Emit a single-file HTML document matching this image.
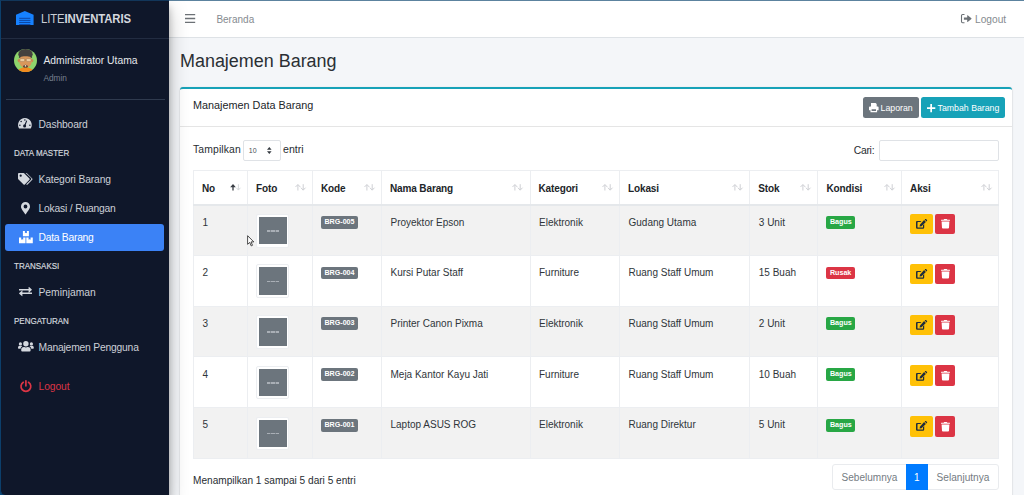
<!DOCTYPE html>
<html lang="id">
<head>
<meta charset="utf-8">
<title>Manajemen Barang</title>
<style>
*{box-sizing:border-box;margin:0;padding:0}
html,body{width:1024px;height:495px;overflow:hidden}
body{position:relative;background:#f4f6f9;font-family:"Liberation Sans",sans-serif;font-size:10px;color:#282d32;line-height:1}
.abs{position:absolute;white-space:nowrap}
svg{display:block;overflow:visible}
/* sidebar */
#sb{position:absolute;left:0;top:0;width:169px;height:495px;background:#0f172a;border-left:1px solid #0c3f6b;border-top:1px solid #12365a;border-bottom-left-radius:5px;box-shadow:0 9px 19px rgba(0,0,0,.25),0 7px 7px rgba(0,0,0,.22);z-index:5}
#sb .t{position:absolute;white-space:nowrap;color:#ccd0d7;font-size:10.3px;left:37.5px}
#sb .h{position:absolute;white-space:nowrap;color:#d3d7de;font-size:8.9px;left:13px;transform-origin:0 50%;transform:scaleX(.9);-webkit-text-stroke:.2px #d3d7de}
#sb svg{position:absolute}
/* navbar */
#nb{position:absolute;left:169px;top:0;width:855px;height:38px;background:#fff;border-top:1px solid #5c839f;border-bottom:1px solid #dee2e6}
#nb svg{position:absolute}
/* card */
#card{position:absolute;left:180px;top:87px;width:831.600px;height:420px;background:#fff;border-top:2px solid #17a2b8;border-radius:3px 3px 0 0;box-shadow:0 0 1px rgba(0,0,0,.125),0 1px 2px rgba(0,0,0,.2)}
#chd{position:absolute;left:0;top:0;width:100%;height:37.7px;border-bottom:1px solid rgba(0,0,0,.1)}
.btn{position:absolute;height:21px;border-radius:2.5px;color:#fff;font-size:8.75px}
.btn svg{position:absolute}
/* table */
#tb{position:absolute;left:193px;top:170px;width:806px;border-collapse:collapse;table-layout:fixed;font-size:10px}
#tb th,#tb td{border:1px solid #eceef1;vertical-align:top;text-align:left;overflow:hidden;white-space:nowrap}
#tb th{height:34px;padding:12.600px 0 0 8px;font-weight:bold;font-size:10px;letter-spacing:-.13px;border-bottom:2px solid #e5e8eb;position:relative;color:#212529}
#tb td{height:50.800px;padding:12.300px 0 0 8.500px;color:#2f353a}
#tb tr.o td{background:#f2f2f2}
.srt{position:absolute;right:6.200px;top:13.100px;width:11px;height:6.600px}
.th{display:block;width:33px;height:33.600px;border:1px solid #eceef1;border-radius:2px;background:#fff;padding:2px 0 0 1.600px;margin-top:-3.900px;margin-left:-.2px}
.th i{display:block;width:27.900px;height:27.500px;background:#6c757d;position:relative}
.th i:after{content:"";position:absolute;left:8.300px;top:13.300px;width:11.300px;height:1.500px;background:repeating-linear-gradient(90deg,#a9afb6 0 3.500px,#858c93 3.500px 4.500px)}
.bd{display:inline-block;font-weight:bold;font-size:7.15px;line-height:7.15px;color:#fff;border-radius:2px;padding:3px 3.600px 2.600px;position:relative;top:-1.600px;left:-.7px}
.bk{background:#6c757d}.bg{background:#28a745}.br{background:#dc3545}
.ab{display:inline-block;height:20.600px;border-radius:2px;vertical-align:top;margin-top:-4.300px;position:relative;left:-.75px}
.ab svg{position:absolute}
</style>
</head>
<body>

<!-- SIDEBAR -->
<div class="abs" style="left:0;top:0;width:10px;height:495px;background:linear-gradient(180deg,#0c3f6b 0,#0c3f6b 470px,#0d5d9c 495px);z-index:4"></div>
<div id="sb">
  <div class="abs" style="left:0;top:36.5px;width:168px;height:1px;background:#222c41"></div>
  <!-- warehouse -->
  <svg style="left:15px;top:10px" width="17.6" height="14" viewBox="0 0 17.6 14"><path d="M8.8 0 17.6 3.7V14H0V3.7z" fill="#1681ff"/><path d="M3.2 7.3h11.2M3.2 9.4h11.2M3.2 11.5h11.2M3.2 13.6h11.2" stroke="#0b3f9a" stroke-width=".9"/></svg>
  <div class="abs" style="left:40.200px;top:12.200px;font-size:12px;color:#d5d8de;letter-spacing:-.15px;transform-origin:0 50%;transform:scaleX(.945)"><span style="color:#c9cdd4">LITE</span><b>INVENTARIS</b></div>
  <!-- avatar -->
  <svg style="left:12.8px;top:48.2px;border-radius:50%;overflow:hidden" width="23" height="23" viewBox="0 0 23 23"><g><rect width="23" height="23" fill="#8ed56c"/><ellipse cx="11.5" cy="5.2" rx="7.2" ry="5.6" fill="#45423f"/><ellipse cx="4.900" cy="11.600" rx="1.200" ry="1.600" fill="#c98a50"/><ellipse cx="18.100" cy="11.600" rx="1.200" ry="1.600" fill="#c98a50"/><ellipse cx="11.5" cy="12" rx="6.300" ry="7" fill="#d9975b"/><path d="M4.800 9.200Q5.200 3.600 11.500 3.800Q17.800 3.600 18.200 9.200Q15.500 6.600 11.500 7.300Q7.500 6.600 4.800 9.200z" fill="#45423f"/><rect x="6" y="9.700" width="4.700" height="2.700" rx=".9" fill="#f3d2a4" stroke="#8a6a4a" stroke-width=".4"/><rect x="12.300" y="9.700" width="4.700" height="2.700" rx=".9" fill="#f3d2a4" stroke="#8a6a4a" stroke-width=".4"/><path d="M10.700 11h1.600" stroke="#8a6a4a" stroke-width=".4"/><ellipse cx="11.5" cy="17.600" rx="2.300" ry="1.900" fill="#4a3a30"/><ellipse cx="11.5" cy="16.900" rx=".9" ry=".8" fill="#f0e0d0"/><ellipse cx="11.5" cy="23.400" rx="8.600" ry="4.800" fill="#f18b1f"/></g></svg>
  <div class="abs" style="left:42.4px;top:54.5px;font-size:10.34px;color:#e4e7eb">Administrator Utama</div>
  <div class="abs" style="left:42.4px;top:72.5px;font-size:8.3px;color:#77808f">Admin</div>
  <div class="abs" style="left:5px;top:98.200px;width:159px;height:1px;background:#2f3a4e"></div>

  <!-- tachometer -->
  <svg style="left:17.300px;top:116.900px" width="13.8" height="10.6" viewBox="0 0 13.8 10.6"><path d="M6.9 0A6.9 6.9 0 0 0 .95 10.35.5.5 0 0 0 1.4 10.6H12.4a.5.5 0 0 0 .45-.25A6.9 6.9 0 0 0 6.9 0z" fill="#d4d8de"/><g fill="#0f172a"><circle cx="6.9" cy="1.9" r=".75"/><circle cx="3.1" cy="3.6" r=".75"/><circle cx="1.9" cy="7.2" r=".75"/><circle cx="11.9" cy="7.2" r=".75"/><circle cx="6.6" cy="8" r="1.5"/><path d="M6.2 7.2 8.3 2.4 9.2 2.8 7.4 7.8z"/></g></svg>
  <div class="t" style="top:119.2px;letter-spacing:-0.13px">Dashboard</div>
  <div class="h" style="top:148.4px">DATA MASTER</div>
  <!-- tags -->
  <svg style="left:16.8px;top:172.2px" width="15" height="11.8" viewBox="0 0 15 11.8"><path d="M0 .9V5.5a.9.9 0 0 0 .26.63l5.3 5.3a.9.9 0 0 0 1.27 0l4.6-4.6a.9.9 0 0 0 0-1.27L6.13.26A.9.9 0 0 0 5.5 0H.9A.9.9 0 0 0 0 .9zM2.7 1.6a1.1 1.1 0 1 1 0 2.2 1.1 1.1 0 0 1 0-2.2z" fill="#d4d8de" fill-rule="evenodd"/><path d="M7.6 0H8.3a.9.9 0 0 1 .63.26l5.3 5.3a.9.9 0 0 1 0 1.27l-4.6 4.6a.9.9 0 0 1-1.27 0l-.1-.1 4.7-4.7a1.2 1.2 0 0 0 0-1.7z" fill="#d4d8de"/></svg>
  <div class="t" style="top:174.2px;letter-spacing:-0.14px">Kategori Barang</div>
  <!-- map marker -->
  <svg style="left:19.8px;top:200.7px" width="9" height="12.4" viewBox="0 0 9 12.4"><path d="M4.5 0A4.5 4.5 0 0 0 0 4.5C0 6.4.65 6.9 4.04 12.1a.55.55 0 0 0 .92 0C8.35 6.9 9 6.4 9 4.5A4.5 4.5 0 0 0 4.5 0zm0 6.4a1.9 1.9 0 1 1 0-3.8 1.9 1.9 0 0 1 0 3.8z" fill="#d4d8de" fill-rule="evenodd"/></svg>
  <div class="t" style="top:203.2px;letter-spacing:-0.19px">Lokasi / Ruangan</div>
  <div class="abs" style="left:4px;top:223px;width:159.3px;height:27px;background:#3b82f6;border-radius:3px"></div>
  <!-- boxes -->
  <svg style="left:17.6px;top:229.6px" width="13.8" height="12.2" viewBox="0 0 13.8 12.2"><path d="M3.9 0h2V2.2l1-.5 1 .5V0h2V5.3h-6zM0 6.6h2.2V8.8l1-.5 1 .5V6.6h2.3v5.6H0zM7.3 6.6h2.3V8.8l1-.5 1 .5V6.6h2.2v5.6H7.3z" fill="#fff"/></svg>
  <div class="t" style="top:232.2px;color:#fff;letter-spacing:-0.25px">Data Barang</div>
  <div class="h" style="top:261.4px">TRANSAKSI</div>
  <!-- exchange -->
  <svg style="left:17.8px;top:285.8px" width="13" height="9.2" viewBox="0 0 13 9.2"><path d="M0 2.1h9.6V.3c0-.3.3-.4.5-.2l2.7 2.4c.2.2.2.4 0 .6L10.100 5.500c-.2.200-.5.100-.5-.200V3.600H0zM13 7.100H3.400v1.800c0 .300-.3.400-.5.200L.2 6.700c-.2-.2-.2-.4 0-.6L2.900 3.700c.2-.2.500-.1.500.2V5.600H13z" fill="#d4d8de"/></svg>
  <div class="t" style="top:287.2px">Peminjaman</div>
  <div class="h" style="top:315.6px">PENGATURAN</div>
  <!-- users -->
  <svg style="left:16.6px;top:339.9px" width="15.8" height="10.6" viewBox="0 0 15.8 10.6"><g fill="#d4d8de"><circle cx="2.4" cy="2.9" r="1.6"/><circle cx="13.4" cy="2.9" r="1.6"/><circle cx="7.9" cy="2.8" r="2.7"/><path d="M0 7.100V6.400A1.600 1.600 0 0 1 1.600 4.800h1.600c.4 0 .8.200 1.100.5A3.600 3.600 0 0 0 2.500 7.800H.7A.7.700 0 0 1 0 7.100zM15.800 7.100V6.400a1.600 1.600 0 0 0-1.600-1.600h-1.600c-.4 0-.8.200-1.100.5a3.600 3.600 0 0 1 1.800 2.500h1.800a.7.700 0 0 0 .7-.7zM9.800 6.100h-.2a3.900 3.900 0 0 1-3.400 0H6A2.800 2.800 0 0 0 3.200 8.900v.7a1 1 0 0 0 1 1h7.400a1 1 0 0 0 1-1v-.7A2.800 2.800 0 0 0 9.800 6.100z"/></g></svg>
  <div class="t" style="top:342.2px;letter-spacing:-0.19px">Manajemen Pengguna</div>
  <!-- power -->
  <svg style="left:18.9px;top:378.6px" width="11.8" height="11.8" viewBox="0 0 11.8 11.8"><path d="M3.300 2.300A4.900 4.900 0 1 0 8.500 2.300" fill="none" stroke="#dc3545" stroke-width="1.7" stroke-linecap="round"/><path d="M5.900.8V5.800" stroke="#dc3545" stroke-width="1.7" stroke-linecap="round"/></svg>
  <div class="t" style="top:381.2px;color:#dc3545;letter-spacing:-0.1px">Logout</div>
</div>

<!-- NAVBAR -->
<div id="nb">
  <svg style="left:15.600px;top:13.100px" width="10.2" height="9" viewBox="0 0 10.2 9"><path d="M0 .7h10.200M0 4.500h10.200M0 8.300h10.200" stroke="#6c7176" stroke-width="1.300"/></svg>
  <div class="abs" style="left:47.4px;top:13.8px;font-size:10px;color:#868b90">Beranda</div>
  <svg style="left:792.200px;top:12.800px" width="10.600" height="9.200" viewBox="0 0 10.600 9.200"><path d="M3.500.5H1.600A1.100 1.100 0 0 0 .5 1.600V7.600A1.100 1.100 0 0 0 1.600 8.700H3.500" fill="none" stroke="#6c7176" stroke-width="1.100"/><path d="M2.900 3.400H6.200V1.500c0-.3.300-.4.500-.2l3.700 3c.2.200.2.400 0 .6l-3.700 3c-.2.200-.5.100-.5-.2V5.800H2.900z" fill="#6c7176"/></svg>
  <div class="abs" style="left:806px;top:13.9px;font-size:10.2px;color:#868b90">Logout</div>
</div>

<!-- TITLE -->
<div class="abs" style="left:180px;top:52.900px;font-size:17.95px;color:#2a2f34">Manajemen Barang</div>

<!-- CARD -->
<div id="card">
  <div id="chd"></div>
  <div class="abs" style="left:13px;top:10.6px;font-size:10.83px;color:#212529">Manajemen Data Barang</div>
  <div class="btn" style="left:683px;top:8px;width:56.3px;background:#6c757d">
    <svg style="left:6px;top:5.800px" width="9.600" height="9.200" viewBox="0 0 9.600 9.200"><path d="M2 0H6.600L7.700 1.100V3.400H2zM.9 3.400H8.700a.9.900 0 0 1 .9.900V7.200H8.100V9.200H1.500V7.200H0V4.300a.9.900 0 0 1 .9-.9zM2.600 6.300V8.100H7V6.300z" fill="#fff" fill-rule="evenodd"/></svg>
    <span class="abs" style="left:17.6px;top:7.2px">Laporan</span></div>
  <div class="btn" style="left:741.4px;top:8px;width:83.600px;background:#17a2b8">
    <svg style="left:5.900px;top:6.700px" width="8.300" height="8.300" viewBox="0 0 8.300 8.300"><path d="M4.150 0V8.300M0 4.150H8.300" stroke="#fff" stroke-width="1.700"/></svg>
    <span class="abs" style="left:16.2px;top:7.2px">Tambah Barang</span></div>
</div>

<!-- LENGTH / SEARCH -->
<div class="abs" style="left:193px;top:145.3px;font-size:10.39px;letter-spacing:.13px">Tampilkan</div>
<div class="abs" style="left:243px;top:139.5px;width:38px;height:21.5px;border:1px solid #dfe2e6;border-radius:2px;background:#fff"><span class="abs" style="left:4.800px;top:6.800px;font-size:7px;color:#495057">10</span>
  <svg class="abs" style="left:23px;top:6.800px" width="4.600" height="7" viewBox="0 0 4.600 7"><path d="M0 2.800 2.300 0 4.600 2.800zM0 4.200 2.300 7 4.600 4.200z" fill="#343a40"/></svg></div>
<div class="abs" style="left:283px;top:144.400px;font-size:10.6px">entri</div>
<div class="abs" style="left:853.700px;top:145.600px;font-size:10.4px;letter-spacing:-.27px">Cari:</div>
<div class="abs" style="left:879px;top:139.5px;width:119.5px;height:21.5px;border:1px solid #dfe2e6;border-radius:2px;background:#fff"></div>

<!-- TABLE -->
<table id="tb">
<colgroup><col style="width:54px"><col style="width:65px"><col style="width:69px"><col style="width:148.5px"><col style="width:89.5px"><col style="width:130.3px"><col style="width:68.2px"><col style="width:83.6px"><col style="width:97px"></colgroup>
<tr><th>No<svg class="srt"><path d="M3 6.500V1.200" fill="none" stroke="#3a3f45" stroke-width="1.300"/><path d="M.2 3.200 3 .1 5.800 3.200z" fill="#3a3f45"/><path d="M8.400.2V5.800M6.400 3.800 8.400 6.100 10.400 3.800" fill="none" stroke="#cfd2d6" stroke-width=".85"/></svg></th><th>Foto<svg class="srt"><path d="M2.900 6.500V.9M.5 3 2.900.5 5.300 3" fill="none" stroke="#cbced2" stroke-width=".95"/><path d="M8.200.2V5.800M5.900 3.700 8.200 6.200 10.500 3.700" fill="none" stroke="#cbced2" stroke-width=".95"/></svg></th><th>Kode<svg class="srt"><path d="M2.900 6.500V.9M.5 3 2.900.5 5.300 3" fill="none" stroke="#cbced2" stroke-width=".95"/><path d="M8.200.2V5.800M5.900 3.700 8.200 6.200 10.500 3.700" fill="none" stroke="#cbced2" stroke-width=".95"/></svg></th><th>Nama Barang<svg class="srt"><path d="M2.900 6.500V.9M.5 3 2.900.5 5.300 3" fill="none" stroke="#cbced2" stroke-width=".95"/><path d="M8.200.2V5.800M5.900 3.700 8.200 6.200 10.500 3.700" fill="none" stroke="#cbced2" stroke-width=".95"/></svg></th><th>Kategori<svg class="srt"><path d="M2.900 6.500V.9M.5 3 2.900.5 5.300 3" fill="none" stroke="#cbced2" stroke-width=".95"/><path d="M8.200.2V5.800M5.900 3.700 8.200 6.200 10.500 3.700" fill="none" stroke="#cbced2" stroke-width=".95"/></svg></th><th>Lokasi<svg class="srt"><path d="M2.900 6.500V.9M.5 3 2.900.5 5.300 3" fill="none" stroke="#cbced2" stroke-width=".95"/><path d="M8.200.2V5.800M5.900 3.700 8.200 6.200 10.500 3.700" fill="none" stroke="#cbced2" stroke-width=".95"/></svg></th><th>Stok<svg class="srt"><path d="M2.900 6.500V.9M.5 3 2.900.5 5.300 3" fill="none" stroke="#cbced2" stroke-width=".95"/><path d="M8.200.2V5.800M5.900 3.700 8.200 6.200 10.500 3.700" fill="none" stroke="#cbced2" stroke-width=".95"/></svg></th><th>Kondisi<svg class="srt"><path d="M2.900 6.500V.9M.5 3 2.900.5 5.300 3" fill="none" stroke="#cbced2" stroke-width=".95"/><path d="M8.200.2V5.800M5.900 3.700 8.200 6.200 10.500 3.700" fill="none" stroke="#cbced2" stroke-width=".95"/></svg></th><th>Aksi<svg class="srt"><path d="M2.900 6.500V.9M.5 3 2.900.5 5.300 3" fill="none" stroke="#cbced2" stroke-width=".95"/><path d="M8.200.2V5.800M5.900 3.700 8.200 6.200 10.500 3.700" fill="none" stroke="#cbced2" stroke-width=".95"/></svg></th></tr>
<tr class="o"><td>1</td><td><span class="th"><i></i></span></td><td><span class="bd bk">BRG-005</span></td><td>Proyektor Epson</td><td>Elektronik</td><td>Gudang Utama</td><td>3 Unit</td><td><span class="bd bg">Bagus</span></td><td><span class="ab" style="width:22.900px;background:#ffc107"><svg style="left:6px;top:5.300px" width="11.200" height="10"><path d="M1.300 1.900H5.500L4.300 3.100H1.900a.4.400 0 0 0-.4.400V8.200a.4.400 0 0 0 .4.400H6.600a.4.400 0 0 0 .4-.4V6.300L8.200 5.100V8.600A1.200 1.200 0 0 1 7 9.800H1.200A1.200 1.200 0 0 1 0 8.600V3.100A1.200 1.200 0 0 1 1.300 1.900z" fill="#1f2d3d"/><path d="M8.100 1.100 9.900 2.900 5.500 7.300 3.600 7.600 3.900 5.700zM8.700.5 9.200.1a.6.600 0 0 1 .8 0l1 1a.6.600 0 0 1 0 .8L10.500 2.400z" fill="#1f2d3d"/></svg></span><span class="ab" style="width:20px;margin-left:2.400px;background:#dc3545"><svg style="left:5.500px;top:5.500px" width="9" height="9.500"><path d="M.3.700H2.700L3 .2A.4.400 0 0 1 3.400 0H5.600A.4.400 0 0 1 6 .2L6.300.7H8.700A.3.300 0 0 1 9 1V1.500A.3.300 0 0 1 8.700 1.800H.3A.3.300 0 0 1 0 1.500V1A.3.300 0 0 1 .3.700zM.6 2.400H8.400L8 8.700A.9.900 0 0 1 7.100 9.500H1.900A.9.900 0 0 1 1 8.700z" fill="#fff"/></svg></span></td></tr>
<tr><td>2</td><td><span class="th"><i></i></span></td><td><span class="bd bk">BRG-004</span></td><td>Kursi Putar Staff</td><td>Furniture</td><td>Ruang Staff Umum</td><td>15 Buah</td><td><span class="bd br">Rusak</span></td><td><span class="ab" style="width:22.900px;background:#ffc107"><svg style="left:6px;top:5.300px" width="11.200" height="10"><path d="M1.300 1.900H5.500L4.300 3.100H1.900a.4.400 0 0 0-.4.400V8.200a.4.400 0 0 0 .4.400H6.600a.4.400 0 0 0 .4-.4V6.300L8.200 5.100V8.600A1.200 1.200 0 0 1 7 9.800H1.200A1.200 1.200 0 0 1 0 8.600V3.100A1.200 1.200 0 0 1 1.300 1.900z" fill="#1f2d3d"/><path d="M8.100 1.100 9.900 2.900 5.500 7.300 3.600 7.600 3.900 5.700zM8.700.5 9.200.1a.6.600 0 0 1 .8 0l1 1a.6.600 0 0 1 0 .8L10.500 2.400z" fill="#1f2d3d"/></svg></span><span class="ab" style="width:20px;margin-left:2.400px;background:#dc3545"><svg style="left:5.500px;top:5.500px" width="9" height="9.500"><path d="M.3.700H2.700L3 .2A.4.400 0 0 1 3.400 0H5.600A.4.400 0 0 1 6 .2L6.300.7H8.700A.3.300 0 0 1 9 1V1.500A.3.300 0 0 1 8.700 1.800H.3A.3.300 0 0 1 0 1.500V1A.3.300 0 0 1 .3.700zM.6 2.400H8.400L8 8.700A.9.900 0 0 1 7.100 9.500H1.900A.9.900 0 0 1 1 8.700z" fill="#fff"/></svg></span></td></tr>
<tr class="o"><td>3</td><td><span class="th"><i></i></span></td><td><span class="bd bk">BRG-003</span></td><td>Printer Canon Pixma</td><td>Elektronik</td><td>Ruang Staff Umum</td><td>2 Unit</td><td><span class="bd bg">Bagus</span></td><td><span class="ab" style="width:22.900px;background:#ffc107"><svg style="left:6px;top:5.300px" width="11.200" height="10"><path d="M1.300 1.900H5.500L4.300 3.100H1.900a.4.400 0 0 0-.4.400V8.200a.4.400 0 0 0 .4.400H6.600a.4.400 0 0 0 .4-.4V6.300L8.200 5.100V8.600A1.200 1.200 0 0 1 7 9.800H1.200A1.200 1.200 0 0 1 0 8.600V3.100A1.200 1.200 0 0 1 1.300 1.900z" fill="#1f2d3d"/><path d="M8.100 1.100 9.900 2.900 5.500 7.300 3.600 7.600 3.900 5.700zM8.700.5 9.200.1a.6.600 0 0 1 .8 0l1 1a.6.600 0 0 1 0 .8L10.500 2.400z" fill="#1f2d3d"/></svg></span><span class="ab" style="width:20px;margin-left:2.400px;background:#dc3545"><svg style="left:5.500px;top:5.500px" width="9" height="9.500"><path d="M.3.700H2.700L3 .2A.4.400 0 0 1 3.400 0H5.600A.4.400 0 0 1 6 .2L6.300.7H8.700A.3.300 0 0 1 9 1V1.500A.3.300 0 0 1 8.700 1.800H.3A.3.300 0 0 1 0 1.500V1A.3.300 0 0 1 .3.700zM.6 2.400H8.400L8 8.700A.9.900 0 0 1 7.100 9.500H1.900A.9.900 0 0 1 1 8.700z" fill="#fff"/></svg></span></td></tr>
<tr><td>4</td><td><span class="th"><i></i></span></td><td><span class="bd bk">BRG-002</span></td><td>Meja Kantor Kayu Jati</td><td>Furniture</td><td>Ruang Staff Umum</td><td>10 Buah</td><td><span class="bd bg">Bagus</span></td><td><span class="ab" style="width:22.900px;background:#ffc107"><svg style="left:6px;top:5.300px" width="11.200" height="10"><path d="M1.300 1.900H5.500L4.300 3.100H1.900a.4.400 0 0 0-.4.400V8.200a.4.400 0 0 0 .4.400H6.600a.4.400 0 0 0 .4-.4V6.300L8.200 5.100V8.600A1.200 1.200 0 0 1 7 9.800H1.200A1.200 1.200 0 0 1 0 8.600V3.100A1.200 1.200 0 0 1 1.300 1.900z" fill="#1f2d3d"/><path d="M8.100 1.100 9.900 2.900 5.500 7.300 3.600 7.600 3.900 5.700zM8.700.5 9.200.1a.6.600 0 0 1 .8 0l1 1a.6.600 0 0 1 0 .8L10.500 2.400z" fill="#1f2d3d"/></svg></span><span class="ab" style="width:20px;margin-left:2.400px;background:#dc3545"><svg style="left:5.500px;top:5.500px" width="9" height="9.500"><path d="M.3.700H2.700L3 .2A.4.400 0 0 1 3.400 0H5.600A.4.400 0 0 1 6 .2L6.300.7H8.700A.3.300 0 0 1 9 1V1.500A.3.300 0 0 1 8.700 1.800H.3A.3.300 0 0 1 0 1.500V1A.3.300 0 0 1 .3.700zM.6 2.400H8.400L8 8.700A.9.900 0 0 1 7.100 9.500H1.900A.9.900 0 0 1 1 8.700z" fill="#fff"/></svg></span></td></tr>
<tr class="o"><td>5</td><td><span class="th"><i></i></span></td><td><span class="bd bk">BRG-001</span></td><td>Laptop ASUS ROG</td><td>Elektronik</td><td>Ruang Direktur</td><td>5 Unit</td><td><span class="bd bg">Bagus</span></td><td><span class="ab" style="width:22.900px;background:#ffc107"><svg style="left:6px;top:5.300px" width="11.200" height="10"><path d="M1.300 1.900H5.500L4.300 3.100H1.900a.4.400 0 0 0-.4.400V8.200a.4.400 0 0 0 .4.400H6.600a.4.400 0 0 0 .4-.4V6.300L8.200 5.100V8.600A1.200 1.200 0 0 1 7 9.800H1.200A1.200 1.200 0 0 1 0 8.600V3.100A1.200 1.200 0 0 1 1.300 1.900z" fill="#1f2d3d"/><path d="M8.100 1.100 9.900 2.900 5.500 7.300 3.600 7.600 3.900 5.700zM8.700.5 9.200.1a.6.600 0 0 1 .8 0l1 1a.6.600 0 0 1 0 .8L10.500 2.400z" fill="#1f2d3d"/></svg></span><span class="ab" style="width:20px;margin-left:2.400px;background:#dc3545"><svg style="left:5.500px;top:5.500px" width="9" height="9.500"><path d="M.3.700H2.700L3 .2A.4.400 0 0 1 3.400 0H5.600A.4.400 0 0 1 6 .2L6.300.7H8.700A.3.300 0 0 1 9 1V1.500A.3.300 0 0 1 8.700 1.800H.3A.3.300 0 0 1 0 1.500V1A.3.300 0 0 1 .3.700zM.6 2.400H8.400L8 8.700A.9.900 0 0 1 7.100 9.500H1.900A.9.900 0 0 1 1 8.700z" fill="#fff"/></svg></span></td></tr>
</table>

<!-- cursor -->
<svg class="abs" style="left:247px;top:234.500px;z-index:9" width="8" height="12" viewBox="0 0 8 12"><path d="M.6.700V9.300L2.700 7.400 4.200 10.900 5.500 10.300 4 6.900H6.800z" fill="#fff" stroke="#222" stroke-width=".8" stroke-linejoin="round"/></svg>

<!-- FOOTER -->
<div class="abs" style="left:193px;top:475.700px;font-size:10.1px">Menampilkan 1 sampai 5 dari 5 entri</div>
<div class="abs" style="left:832px;top:464px;width:167px;height:25.600px;border:1px solid #e9ebee;border-radius:3px;background:#fff">
  <span class="abs" style="left:8.600px;top:7.500px;font-size:10.04px;color:#747b82">Sebelumnya</span>
  <span class="abs" style="left:72.500px;top:-1px;width:22.700px;height:26px;background:#007bff"></span>
  <span class="abs" style="left:81px;top:7.500px;font-size:10px;color:#fff">1</span>
  <span class="abs" style="left:103.500px;top:7.500px;font-size:10.14px;color:#747b82">Selanjutnya</span>
</div>

</body>
</html>
